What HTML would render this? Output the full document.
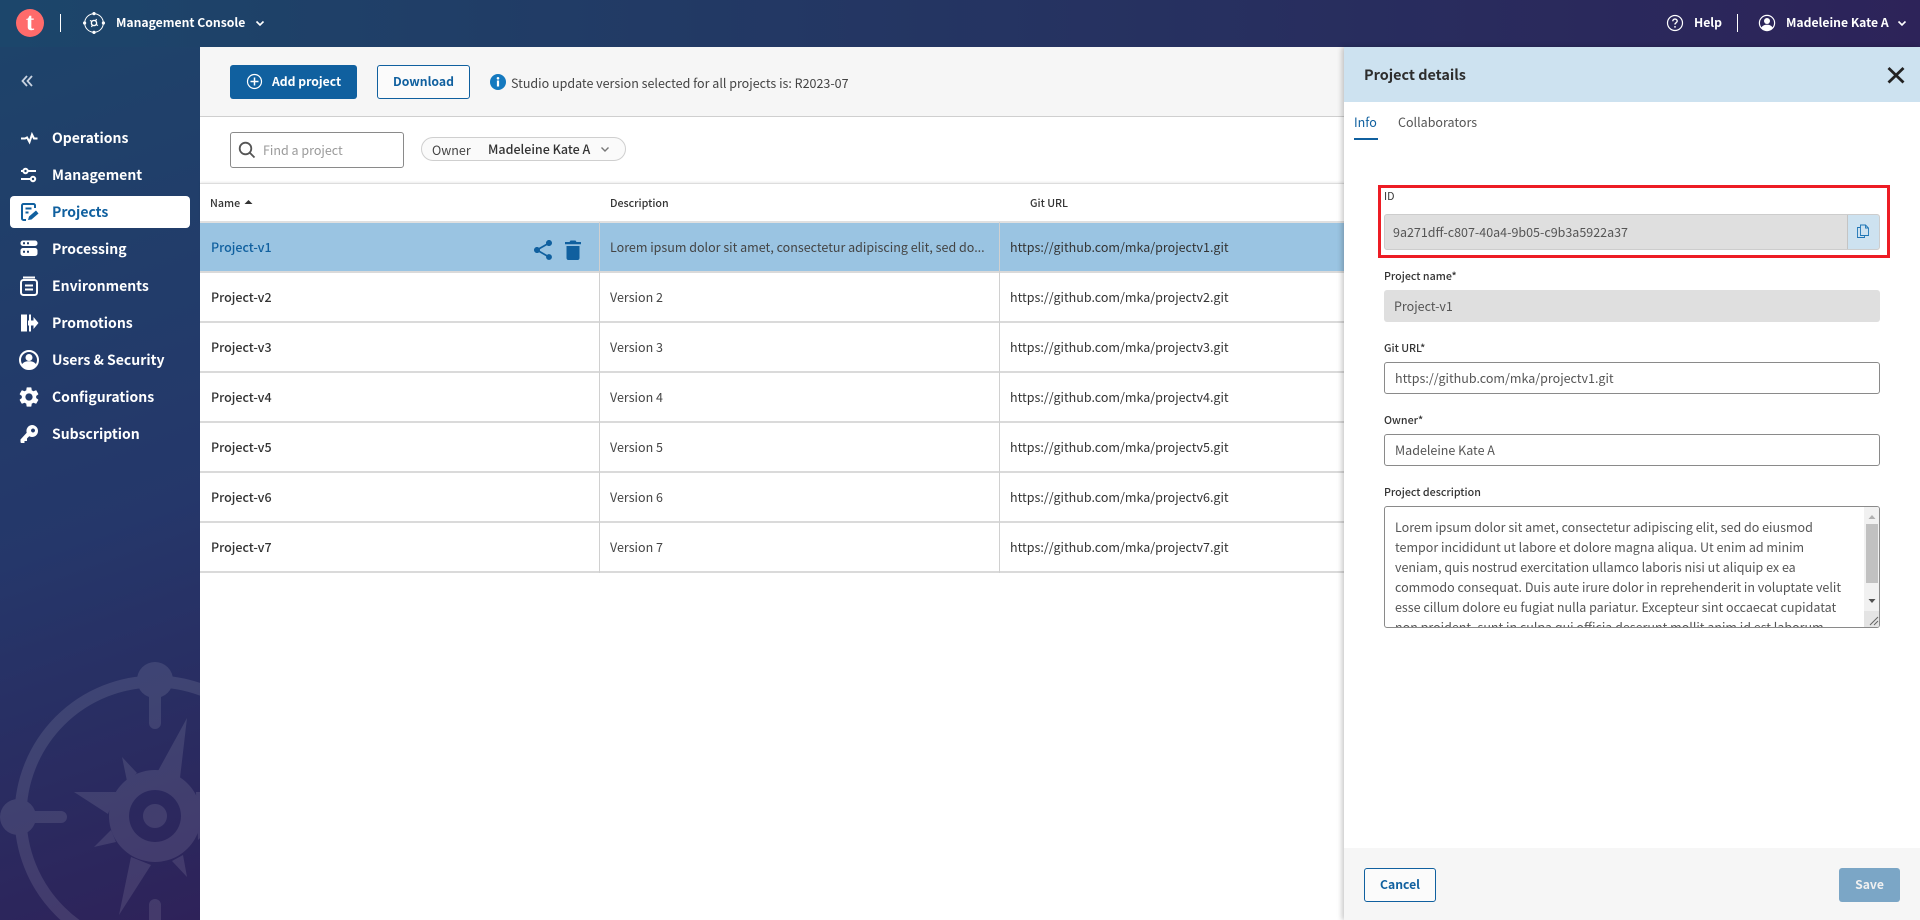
<!DOCTYPE html>
<html lang="en"><head><meta charset="utf-8"><title>Management Console</title>
<style>
*{box-sizing:border-box}
html,body{margin:0;padding:0;width:1920px;height:920px;overflow:hidden;background:#fff}
body{position:relative;font-family:"Noto Sans CJK JP","Liberation Sans",sans-serif;font-size:12.5px;color:#333}
.a{position:absolute}
.t{position:absolute;white-space:nowrap;line-height:20px;height:20px}
.b{font-size:12.2px;font-weight:700}
#top{left:0;top:0;width:1920px;height:47px;background:linear-gradient(90deg,#1c466b,#2d2359)}
#side{left:0;top:47px;width:200px;height:873px;background:linear-gradient(160deg,#1e436a 0%,#25376a 55%,#2e2259 100%);overflow:hidden}
.nav{position:absolute;left:52px;color:#fff;font-weight:700;font-size:14px;line-height:22px;white-space:nowrap}
.ic{position:absolute;left:17px;width:24px;height:24px}
.row{position:absolute;left:200px;width:1144px;height:50px;border-bottom:2px solid #dadada;background:#fff}
.row .n{position:absolute;left:11px;top:14px;font-weight:500;color:#333;line-height:20px}
.row .d{position:absolute;left:410px;top:14px;color:#444;line-height:20px;white-space:nowrap}
.row .g{position:absolute;left:810px;top:14px;color:#333;line-height:20px;white-space:nowrap}
.vl{position:absolute;top:222px;width:1px;height:351px;background:#d0d0d0}
.lbl{position:absolute;left:1384px;font-size:10.7px;color:#333;font-weight:500;line-height:16px;white-space:nowrap}
.inp{position:absolute;left:1384px;width:496px;height:32px;border:1px solid #8a8a8a;border-radius:3px;background:#fff;color:#555;padding-left:10px;line-height:30px;white-space:nowrap}
</style></head><body>

<div class="a" id="top"></div>
<div class="a" style="left:16px;top:9px;width:28px;height:28px;border-radius:50%;background:#ff6b6b"></div>
<div class="t" style="left:16px;top:11px;width:28px;text-align:center;color:#fff;font:bold 25px/24px 'Liberation Serif',serif;height:24px">t</div>
<div class="a" style="left:60px;top:14px;width:1px;height:18px;background:#fff"></div>
<svg class="a" style="left:82px;top:11px" width="24" height="24" viewBox="0 0 24 24" fill="none" stroke="#fff">
<circle cx="12" cy="12" r="9.3" stroke-width="1"/><circle cx="12" cy="2.6" r="1.6" fill="#fff" stroke="none"/><circle cx="12" cy="21.4" r="1.6" fill="#fff" stroke="none"/><circle cx="2.6" cy="12" r="1.6" fill="#fff" stroke="none"/><circle cx="21.4" cy="12" r="1.6" fill="#fff" stroke="none"/><circle cx="12" cy="12" r="2.6" stroke-width="1.4"/><path d="M14.5 8l-1 2.2M9.5 16l1-2.2M8 9.5l2.2 1M16 14.5l-2.2-1" stroke-width="1.2"/></svg>
<div class="t b" style="left:116px;top:12px;color:#fff">Management Console</div>
<svg class="a" style="left:254px;top:17px" width="12" height="12" viewBox="0 0 12 12" fill="none" stroke="#fff" stroke-width="1.6"><path d="M2.5 4.5L6 8l3.5-3.5"/></svg>

<svg class="a" style="left:1666px;top:14px" width="18" height="18" viewBox="0 0 18 18" fill="none" stroke="#fff" stroke-width="1.2"><circle cx="9" cy="9" r="7.5"/><path d="M6.8 7.2c0-1.3 1-2.1 2.2-2.1s2.2.8 2.2 2c0 1.6-2.2 1.6-2.2 3.4" stroke-width="1.4"/><circle cx="9" cy="12.9" r=".9" fill="#fff" stroke="none"/></svg>
<div class="t b" style="left:1694px;top:12px;color:#fff">Help</div>
<div class="a" style="left:1737px;top:14px;width:1px;height:18px;background:#fff"></div>
<svg class="a" style="left:1758px;top:14px" width="18" height="18" viewBox="0 0 18 18" fill="none"><circle cx="9" cy="9" r="7.6" stroke="#fff" stroke-width="1.2"/><circle cx="9" cy="7" r="3" fill="#fff"/><path d="M3.2 14c1-2.4 3.2-3.3 5.8-3.3s4.800.9 5.800 3.300A7.600 7.600 0 0 1 3.200 14z" fill="#fff"/></svg>
<div class="t b" style="left:1786px;top:12px;color:#fff">Madeleine Kate A</div>
<svg class="a" style="left:1896px;top:17px" width="12" height="12" viewBox="0 0 12 12" fill="none" stroke="#fff" stroke-width="1.6"><path d="M2.500 4.500L6 8l3.500-3.500"/></svg>

<div class="a" id="side">
<svg class="a" style="left:0;top:0" width="200" height="873" viewBox="0 47 200 873" fill="none">
<g opacity=".1">
<circle cx="155" cy="816" r="134.500" stroke="#fff" stroke-width="12"/>
<circle cx="155" cy="680" r="18" fill="#fff"/><circle cx="18" cy="817" r="18" fill="#fff"/>
<path d="M155 690v33M30 817h31M155 905v20" stroke="#fff" stroke-width="12" stroke-linecap="round"/>
<path fill="#fff" fill-rule="evenodd" d="M155 770a46 46 0 1 0 .01 0zM155 790a26 26 0 1 1-.01 0zM155 804a12 12 0 1 0 .01 0z"/>
<path fill="#fff" d="M187 718L158 771 180 778zM74 792L116 792 108 814zM119 915L131 857 151 865zM122 757L127 781 137 773zM94 847L111 830 116 842zM187 877L172 861 183 855zM250 790L196 792 198 840z"/>
</g></svg>
</div>

<svg class="a" style="left:19px;top:73px" width="16" height="16" viewBox="0 0 16 16" fill="none" stroke="#c9d3e0" stroke-width="1.800"><path d="M8 3L3.500 8 8 13M13 3L8.500 8 13 13"/></svg>

<svg class="ic" style="top:126px" viewBox="0 0 24 24" fill="none" stroke="#fff" stroke-width="2"><path d="M4 12.500h4l2-1 2.500 4.500 2.500-7.500 2 4h3.500"/></svg>
<div class="nav" style="top:127px">Operations</div>
<svg class="ic" style="top:163px" viewBox="0 0 24 24" fill="none" stroke="#fff" stroke-width="2"><path d="M4 8h15M4 16h15"/><circle cx="8.500" cy="8" r="2.200" fill="#1f4269"/><circle cx="16" cy="16" r="2.200" fill="#1f4269"/></svg>
<div class="nav" style="top:164px">Management</div>

<div class="a" style="left:10px;top:196px;width:180px;height:32px;background:#fff;border-radius:4px"></div>
<svg class="ic" style="top:200px" viewBox="0 0 24 24" fill="none" stroke="#10609f" stroke-width="2"><path d="M9 20H6.500A1.500 1.500 0 0 1 5 18.500V5.500A1.500 1.500 0 0 1 6.500 4h10A1.500 1.500 0 0 1 18 5.500V8"/><path d="M8.500 8.500h6M8.500 12.500h3"/><path d="M11 20l1-3.500 7-6 2.500 3-7 6z" fill="#10609f" stroke="none"/></svg>
<div class="nav" style="top:201px;color:#10609f">Projects</div>

<svg class="ic" style="top:237px" viewBox="0 0 24 24"><path fill="#fff" fill-rule="evenodd" d="M6 3.500h12a2.500 2.500 0 0 1 2.500 2.500v.500A2.500 2.500 0 0 1 18 9H6A2.500 2.500 0 0 1 3.500 6.500V6A2.500 2.500 0 0 1 6 3.500zM6 5.200v2h2v-2zM10 5.200v2h2v-2zM6 11h12a2.500 2.500 0 0 1 2.500 2.500v3A2.500 2.500 0 0 1 18 19H6a2.500 2.500 0 0 1-2.500-2.500v-3A2.500 2.500 0 0 1 6 11zM6 13.800v2h2v-2zM10 13.800v2h2v-2z"/></svg>
<div class="nav" style="top:238px">Processing</div>
<svg class="ic" style="top:274px" viewBox="0 0 24 24" fill="none" stroke="#fff"><rect x="4" y="6" width="16" height="15" rx="2.500" stroke-width="2"/><path d="M6 3.500h12" stroke-width="2"/><path d="M8 11.500h8M8 15.500h8" stroke-width="2"/></svg>
<div class="nav" style="top:275px">Environments</div>
<svg class="ic" style="top:311px" viewBox="0 0 24 24"><path fill="#fff" d="M4 3.500h6v17H4zM12 3.500h2v6h2.500V6l5 6-5 6v-3.500H14v6h-2v-6h-1v-5h1z"/></svg>
<div class="nav" style="top:312px">Promotions</div>
<svg class="ic" style="top:348px" viewBox="0 0 24 24"><circle cx="12" cy="12" r="9" fill="none" stroke="#fff" stroke-width="2"/><circle cx="12" cy="9.500" r="3.500" fill="#fff"/><path d="M4.500 17c1.500-3 4.500-3.800 7.500-3.800s6 .8 7.500 3.800A9 9 0 0 1 4.500 17z" fill="#fff"/></svg>
<div class="nav" style="top:349px">Users &amp; Security</div>
<svg class="ic" style="top:385px" viewBox="0 0 24 24"><path fill="#fff" d="M19.140 12.940c.04-.3.06-.61.06-.94 0-.32-.02-.64-.07-.94l2.030-1.580c.18-.14.23-.41.12-.61l-1.920-3.320c-.12-.22-.37-.29-.59-.22l-2.390.96c-.5-.38-1.030-.7-1.620-.94l-.36-2.540c-.04-.24-.24-.41-.48-.41h-3.840c-.24 0-.43.17-.47.41l-.36 2.540c-.59.24-1.130.57-1.620.94l-2.390-.96c-.22-.08-.47 0-.59.22L2.740 8.870c-.12.21-.08.47.12.61l2.030 1.580c-.05.3-.09.63-.09.94s.02.64.07.94l-2.030 1.580c-.18.14-.23.41-.12.61l1.920 3.320c.12.22.37.29.59.22l2.390-.96c.5.38 1.030.7 1.620.94l.36 2.540c.05.24.24.41.48.41h3.840c.24 0 .44-.17.47-.41l.36-2.540c.59-.24 1.130-.56 1.620-.94l2.390.96c.22.08.47 0 .59-.22l1.920-3.320c.12-.22.07-.47-.12-.61l-2.010-1.580zM12 15.600c-1.980 0-3.600-1.620-3.600-3.600s1.620-3.600 3.600-3.600 3.600 1.620 3.600 3.600-1.620 3.600-3.600 3.600z"/></svg>
<div class="nav" style="top:386px">Configurations</div>
<svg class="ic" style="top:422px" viewBox="0 0 24 24"><path fill="#fff" fill-rule="evenodd" d="M15 3a6 6 0 1 1-2.800 11.300L10 16.500V19H7.500v2H4.500a1 1 0 0 1-1-1v-2.500l6.200-6.700A6 6 0 0 1 15 3zM16 6.500a2 2 0 1 0 .01 0z"/></svg>
<div class="nav" style="top:423px">Subscription</div>

<!-- toolbar -->
<div class="a" style="left:200px;top:47px;width:1144px;height:70px;background:#f6f6f6;border-bottom:1px solid #cfcfcf"></div>
<div class="a" style="left:230px;top:65px;width:127px;height:34px;background:#10609f;border-radius:3px"></div>
<svg class="a" style="left:246px;top:73px" width="17" height="17" viewBox="0 0 17 17" fill="none" stroke="#fff" stroke-width="1.200"><circle cx="8.500" cy="8.500" r="7"/><path d="M8.500 4.500v8M4.500 8.500h8" stroke-width="1.500"/></svg>
<div class="t b" style="left:272px;top:71px;color:#fff">Add project</div>
<div class="a" style="left:377px;top:65px;width:93px;height:34px;border:1px solid #10609f;border-radius:3px;background:#fbfbfb"></div>
<div class="t b" style="left:377px;top:71px;width:93px;text-align:center;color:#10609f">Download</div>
<svg class="a" style="left:490px;top:74px" width="16" height="16" viewBox="0 0 16 16"><circle cx="8" cy="8" r="8" fill="#1479bf"/><rect x="6.900" y="6.500" width="2.200" height="6" fill="#fff"/><circle cx="8" cy="4.300" r="1.300" fill="#fff"/></svg>
<div class="t" style="left:511px;top:73px;color:#444">Studio update version selected for all projects is: R2023-07</div>

<!-- filter -->
<div class="a" style="left:230px;top:132px;width:174px;height:36px;border:1px solid #8a8a8a;border-radius:3px;background:#fff"></div>
<svg class="a" style="left:238px;top:141px" width="18" height="18" viewBox="0 0 18 18" fill="none" stroke="#555" stroke-width="1.800"><circle cx="7.500" cy="7.500" r="5.800"/><path d="M11.800 11.800L16.500 16.500"/></svg>
<div class="t" style="left:263px;top:140px;color:#9a9a9a">Find a project</div>
<div class="a" style="left:421px;top:137px;width:205px;height:24px;border:1px solid #cfcfcf;border-radius:12px;background:#fafafa"></div>
<div class="t" style="left:432px;top:140px;color:#444">Owner</div>
<div class="t" style="left:488px;top:139px;color:#333;font-weight:500">Madeleine Kate A</div>
<svg class="a" style="left:599px;top:143px" width="12" height="12" viewBox="0 0 12 12" fill="none" stroke="#777" stroke-width="1.400"><path d="M2.500 4.500L6 8l3.500-3.500"/></svg>

<!-- table -->
<div class="a" style="left:200px;top:183px;width:1144px;height:40px;background:#fff;border-top:1px solid #ddd;box-shadow:0 -1px 2px rgba(0,0,0,.08);border-bottom:2px solid #e0e0e0"></div>
<div class="t" style="left:210px;top:194px;font-size:10.7px;font-weight:500;color:#333">Name</div>
<svg class="a" style="left:244px;top:199px" width="9" height="6" viewBox="0 0 9 6"><path d="M4.500 1L8.500 5H.5z" fill="#333"/></svg>
<div class="t" style="left:610px;top:194px;font-size:10.7px;font-weight:500;color:#333">Description</div>
<div class="t" style="left:1030px;top:194px;font-size:10.7px;font-weight:500;color:#333">Git URL</div>

<div class="row" style="top:223px;background:#9ac4e2"><div class="n" style="color:#10609f">Project-v1</div><div class="d" style="width:380px;overflow:hidden">Lorem ipsum dolor sit amet, consectetur adipiscing elit, sed do...</div><div class="g">https://github.com/mka/projectv1.git</div></div>
<div class="row" style="top:273px"><div class="n">Project-v2</div><div class="d">Version 2</div><div class="g">https://github.com/mka/projectv2.git</div></div>
<div class="row" style="top:323px"><div class="n">Project-v3</div><div class="d">Version 3</div><div class="g">https://github.com/mka/projectv3.git</div></div>
<div class="row" style="top:373px"><div class="n">Project-v4</div><div class="d">Version 4</div><div class="g">https://github.com/mka/projectv4.git</div></div>
<div class="row" style="top:423px"><div class="n">Project-v5</div><div class="d">Version 5</div><div class="g">https://github.com/mka/projectv5.git</div></div>
<div class="row" style="top:473px"><div class="n">Project-v6</div><div class="d">Version 6</div><div class="g">https://github.com/mka/projectv6.git</div></div>
<div class="row" style="top:523px"><div class="n">Project-v7</div><div class="d">Version 7</div><div class="g">https://github.com/mka/projectv7.git</div></div>
<div class="vl" style="left:599px"></div><div class="vl" style="left:999px"></div>
<svg class="a" style="left:531px;top:238px" width="24" height="24" viewBox="0 0 24 24"><path fill="#10609f" d="M18 16.080c-.76 0-1.440.3-1.960.77L8.910 12.700c.05-.23.09-.46.09-.7s-.04-.47-.09-.7l7.050-4.110c.54.5 1.250.81 2.040.81 1.660 0 3-1.340 3-3s-1.340-3-3-3-3 1.340-3 3c0 .24.04.47.09.7L8.040 9.810C7.500 9.310 6.790 9 6 9c-1.660 0-3 1.340-3 3s1.340 3 3 3c.79 0 1.500-.31 2.040-.81l7.120 4.160c-.05.21-.08.43-.08.65 0 1.610 1.310 2.920 2.920 2.920 1.610 0 2.920-1.310 2.920-2.920s-1.310-2.920-2.920-2.920z"/></svg>
<svg class="a" style="left:561px;top:238px" width="24" height="24" viewBox="0 0 24 24"><path fill="#10609f" d="M5.500 20c0 1.100.7 2 1.800 2h9.400c1.100 0 1.800-.9 1.800-2V8h-13v12zM20 4h-4.500l-1-1.500h-5L8.500 4H4v2.200h16V4z"/></svg>

<!-- panel -->
<div class="a" style="left:1344px;top:47px;width:576px;height:873px;background:#fff;box-shadow:-2px 0 5px rgba(0,0,0,.22)"></div>
<div class="a" style="left:1344px;top:47px;width:576px;height:55px;background:#cde2f0"></div>
<div class="t" style="left:1364px;top:64px;font-size:14.4px;font-weight:700;color:#2d2d2d;line-height:22px;height:22px">Project details</div>
<svg class="a" style="left:1886px;top:65px" width="20" height="20" viewBox="0 0 20 20" stroke="#222" stroke-width="2.800" fill="none"><path d="M2.500 3l15 14.500M17.500 3l-15 14.500"/></svg>
<div class="t" style="left:1354px;top:112px;color:#10609f">Info</div>
<div class="a" style="left:1354px;top:138px;width:24px;height:2px;background:#10609f"></div>
<div class="t" style="left:1398px;top:112px;color:#555">Collaborators</div>

<div class="a" style="left:1378px;top:185px;width:512px;height:73px;border:3px solid #ed1c24"></div>
<div class="lbl" style="left:1384px;top:189px;font-weight:400">ID</div>
<div class="a" style="left:1384px;top:214px;width:496px;height:36px;background:#dfdfdf;border:1px solid #cdcdcd;border-radius:3px"></div>
<div class="t" style="left:1393px;top:222px;color:#555">9a271dff-c807-40a4-9b05-c9b3a5922a37</div>
<div class="a" style="left:1847px;top:215px;width:32px;height:34px;background:#cde2f0;border-left:1px solid #c4c4c4;border-radius:0 3px 3px 0"></div>
<svg class="a" style="left:1856px;top:224px" width="14" height="15" viewBox="0 0 14 15" fill="none" stroke="#1f75b5" stroke-width=".9"><path d="M4.500 3.500H1.500v10h7v-2"/><path d="M4.500 1h5l3 3v7.500h-8z"/><path d="M9.500 1v3h3"/></svg>

<div class="lbl" style="top:269px">Project name*</div>
<div class="a" style="left:1384px;top:290px;width:496px;height:32px;background:#dfdfdf;border-radius:3px"></div>
<div class="t" style="left:1394px;top:296px;color:#555">Project-v1</div>
<div class="lbl" style="top:341px">Git URL*</div>
<div class="inp" style="top:362px">https://github.com/mka/projectv1.git</div>
<div class="lbl" style="top:413px">Owner*</div>
<div class="inp" style="top:434px">Madeleine Kate A</div>
<div class="lbl" style="top:485px">Project description</div>
<div class="a" style="left:1384px;top:506px;width:496px;height:122px;border:1px solid #8a8a8a;border-radius:3px;overflow:hidden;background:#fff">
<div class="a" style="left:10px;top:10px;width:460px;line-height:20px;color:#555;white-space:nowrap">Lorem ipsum dolor sit amet, consectetur adipiscing elit, sed do eiusmod<br>tempor incididunt ut labore et dolore magna aliqua. Ut enim ad minim<br>veniam, quis nostrud exercitation ullamco laboris nisi ut aliquip ex ea<br>commodo consequat. Duis aute irure dolor in reprehenderit in voluptate velit<br>esse cillum dolore eu fugiat nulla pariatur. Excepteur sint occaecat cupidatat<br>non proident, sunt in culpa qui officia deserunt mollit anim id est laborum.</div>
<div class="a" style="left:479px;top:0;width:15px;height:120px;background:#f1f1f1"></div>
<div class="a" style="left:481px;top:17px;width:12px;height:59px;background:#c1c1c1"></div>
<svg class="a" style="left:481px;top:6px" width="12" height="8" viewBox="0 0 12 8"><path d="M6 2l3.500 4h-7z" fill="#b0b0b0"/></svg>
<svg class="a" style="left:481px;top:90px" width="12" height="8" viewBox="0 0 12 8"><path d="M2.500 2h7L6 6z" fill="#505050"/></svg>
<div class="a" style="left:479px;top:104px;width:15px;height:16px;background:#e4e4e4"></div>
<svg class="a" style="left:482px;top:107px" width="12" height="12" viewBox="0 0 12 12" stroke="#666" fill="none"><path d="M11 3L3 11M11 7L7 11"/></svg>
</div>

<div class="a" style="left:1344px;top:848px;width:576px;height:72px;background:#f6f6f6"></div>
<div class="a" style="left:1364px;top:868px;width:72px;height:34px;border:1px solid #10609f;border-radius:3px;background:#fbfbfb"></div>
<div class="t b" style="left:1364px;top:874px;width:72px;text-align:center;color:#10609f">Cancel</div>
<div class="a" style="left:1839px;top:868px;width:61px;height:34px;background:#7ba6c6;border-radius:3px"></div>
<div class="t b" style="left:1839px;top:874px;width:61px;text-align:center;color:#f0f0f0">Save</div>
</body></html>
